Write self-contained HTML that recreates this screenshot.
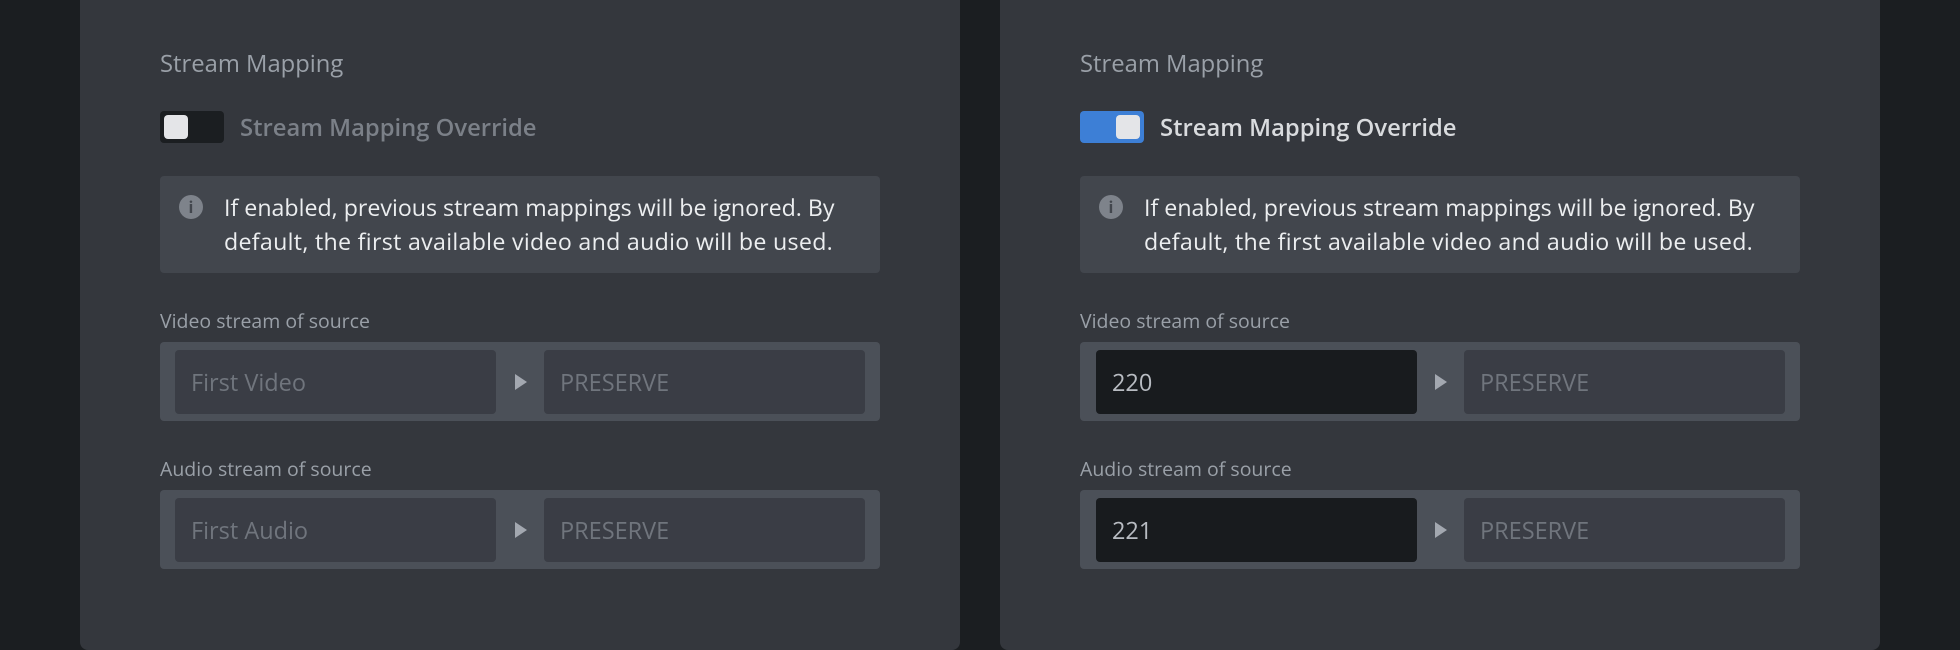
<!DOCTYPE html>
<html><head><meta charset="utf-8"><style>
*{box-sizing:border-box;margin:0;padding:0}
body{width:1960px;height:650px;background:#1b1e21;font-family:"Open Sans","Liberation Sans",sans-serif;position:relative;overflow:hidden}
.panel{position:absolute;top:0;width:880px;height:650px;background:#34373d;border-radius:0 0 8px 8px}
.p1{left:80px}.p2{left:1000px}
.a{position:absolute}
.title{left:80px;top:47px;font-size:23.8px;color:#9aa0a8}
.tog{left:80px;top:111px;width:64px;height:32px;border-radius:4px;background:#1b1e21}
.tog i{position:absolute;top:4px;left:4px;width:24px;height:24px;border-radius:4px;background:#e4e5e8}
.on{background:#3d7fd6}.on i{left:36px}
.tl{left:160px;top:111px;font-size:23.8px;font-weight:600;color:#7b8088}
.tl.en{color:#d9dbde}
.info{left:80px;top:176px;width:720px;height:97px;background:#42464d;border-radius:4px}
.ic{left:19px;top:19px;width:24px;height:24px;border-radius:50%;background:#7e838b;color:#42464d;font-size:16px;font-weight:bold;text-align:center;line-height:24px}
.it{left:64px;top:14px;font-size:23.2px;line-height:34px;color:#eceef0;white-space:nowrap}
.it span{letter-spacing:0.3px}
.lab{left:80px;font-size:19.5px;color:#9aa0a8}
.grp{left:80px;width:720px;height:79px;background:#4b5058;border-radius:4px}
.in{top:8px;height:64px;width:321px;border-radius:4px;background:#3a3d45;font-size:23.5px;color:#70757d;padding-left:16px;line-height:64px}
.in.dark{background:#181b1e;color:#b8bcc2}
.arr{left:355px;top:32px;width:0;height:0;border-left:12px solid #a3a8b0;border-top:8px solid transparent;border-bottom:8px solid transparent}
</style></head><body>
<div class="panel p1">
<div class="a title">Stream Mapping</div>
<div class="a tog"><i></i></div>
<div class="a tl">Stream Mapping Override</div>
<div class="a info"><div class="a ic">i</div><div class="a it">If enabled, previous stream mappings will be ignored. By<br><span>default, the first available video and audio will be used.</span></div></div>
<div class="a lab" style="top:307px">Video stream of source</div>
<div class="a grp" style="top:342px"><div class="a in" style="left:15px">First Video</div><div class="a arr"></div><div class="a in" style="left:384px">PRESERVE</div></div>
<div class="a lab" style="top:455px">Audio stream of source</div>
<div class="a grp" style="top:490px"><div class="a in" style="left:15px">First Audio</div><div class="a arr"></div><div class="a in" style="left:384px">PRESERVE</div></div>
</div>
<div class="panel p2">
<div class="a title">Stream Mapping</div>
<div class="a tog on"><i></i></div>
<div class="a tl en">Stream Mapping Override</div>
<div class="a info"><div class="a ic">i</div><div class="a it">If enabled, previous stream mappings will be ignored. By<br><span>default, the first available video and audio will be used.</span></div></div>
<div class="a lab" style="top:307px">Video stream of source</div>
<div class="a grp" style="top:342px"><div class="a in dark" style="left:16px">220</div><div class="a arr"></div><div class="a in" style="left:384px">PRESERVE</div></div>
<div class="a lab" style="top:455px">Audio stream of source</div>
<div class="a grp" style="top:490px"><div class="a in dark" style="left:16px">221</div><div class="a arr"></div><div class="a in" style="left:384px">PRESERVE</div></div>
</div>
</body></html>
